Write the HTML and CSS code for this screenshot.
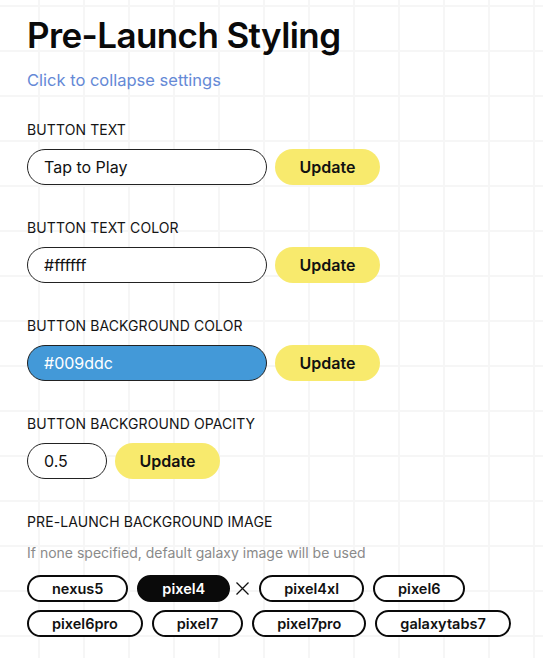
FILE: index.html
```html
<!DOCTYPE html>
<html lang="en">
<head>
<meta charset="utf-8">
<title>Pre-Launch Styling</title>
<link rel="stylesheet" href="styles.css">
</head>
<body>
<main class="page">
  <h1 class="title">Pre-Launch Styling</h1>
  <a class="collapse" href="#">Click to collapse settings</a>

  <section class="field first">
    <div class="label">BUTTON TEXT</div>
    <div class="row">
      <input class="input" type="text" value="Tap to Play">
      <button class="update">Update</button>
    </div>
  </section>

  <section class="field">
    <div class="label">BUTTON TEXT COLOR</div>
    <div class="row">
      <input class="input" type="text" value="#ffffff">
      <button class="update">Update</button>
    </div>
  </section>

  <section class="field">
    <div class="label">BUTTON BACKGROUND COLOR</div>
    <div class="row">
      <input class="input input-blue" type="text" value="#009ddc">
      <button class="update">Update</button>
    </div>
  </section>

  <section class="field">
    <div class="label">BUTTON BACKGROUND OPACITY</div>
    <div class="row">
      <input class="input input-small" type="text" value="0.5">
      <button class="update">Update</button>
    </div>
  </section>

  <section class="field">
    <div class="label">PRE-LAUNCH BACKGROUND IMAGE</div>
    <p class="hint">If none specified, default galaxy image will be used</p>
    <div class="chips">
      <span class="chip">nexus5</span>
      <span class="chip-group">
        <span class="chip chip-active">pixel4</span>
        <svg class="clear" width="15" height="15" viewBox="0 0 15 15" aria-hidden="true"><path d="M1.5 1.5 L13.5 13.5 M13.5 1.5 L1.5 13.5" stroke="#111" stroke-width="1.3" fill="none"/></svg>
      </span>
      <span class="chip">pixel4xl</span>
      <span class="chip">pixel6</span>
      <span class="chip">pixel6pro</span>
      <span class="chip">pixel7</span>
      <span class="chip">pixel7pro</span>
      <span class="chip">galaxytabs7</span>
    </div>
  </section>
</main>
</body>
</html>
```

FILE: styles.css
```css
html, body {
  margin: 0;
  padding: 0;
}

body {
  background-color: #ffffff;
  background-image:
    linear-gradient(to right, #f6f6f6 0, #f6f6f6 2px, transparent 2px),
    linear-gradient(to bottom, #f6f6f6 0, #f6f6f6 2px, transparent 2px);
  background-size: 45px 45px;
  background-position: 38px 5px;
  min-height: 658px;
  font-family: "Inter", "Liberation Sans", sans-serif;
  color: #111;
}

.page {
  padding: 13px 27px 0 27px;
}

.title {
  margin: 0;
  font-size: 35px;
  line-height: 44px;
  font-weight: 600;
  letter-spacing: -0.6px;
  color: #0a0a0a;
}

.collapse {
  display: block;
  margin-top: 13px;
  font-size: 16.5px;
  line-height: 20px;
  color: #6589d6;
  text-decoration: none;
}

.field {
  margin-top: 33px;
}

.field.first {
  margin-top: 30px;
}

.label {
  font-size: 14px;
  line-height: 20px;
  color: #151515;
  letter-spacing: 0.1px;
}

.row {
  display: flex;
  align-items: center;
  gap: 8px;
  margin-top: 9px;
}

.input {
  box-sizing: border-box;
  width: 240px;
  height: 36px;
  border: 1px solid #222;
  border-radius: 18px;
  padding: 0 16px;
  font-family: "Inter", "Liberation Sans", sans-serif;
  font-size: 16px;
  color: #111;
  background: #fff;
  outline: none;
}

.input-blue {
  background: #4399d8;
  color: #fff;
}

.input-small {
  width: 80px;
}

.update {
  box-sizing: border-box;
  width: 105px;
  height: 36px;
  border: none;
  border-radius: 18px;
  background: #f8ea6d;
  font-family: "Inter", "Liberation Sans", sans-serif;
  font-size: 16px;
  font-weight: 600;
  color: #111;
  padding: 0;
}

.hint {
  margin: 11px 0 0 0;
  font-size: 14px;
  line-height: 20px;
  color: #8a8a8a;
}

.chips {
  display: flex;
  flex-wrap: wrap;
  gap: 8px 9px;
  margin-top: 12px;
}

.chip-group {
  display: flex;
  align-items: center;
  gap: 5px;
}

.chip {
  box-sizing: border-box;
  height: 27px;
  display: inline-flex;
  align-items: center;
  justify-content: center;
  padding: 0 23px;
  border: 2px solid #0a0a0a;
  border-radius: 14px;
  background: #fff;
  font-size: 14.5px;
  font-weight: 600;
  color: #111;
}

.chip-active {
  background: #0a0a0a;
  color: #fff;
}

.clear {
  display: block;
}
```
